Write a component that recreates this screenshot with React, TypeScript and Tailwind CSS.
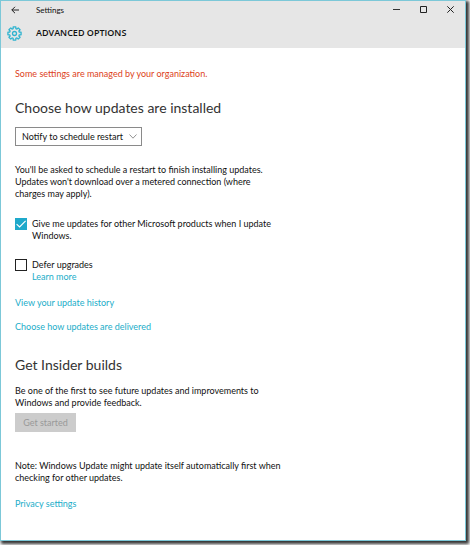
import type { ReactNode } from "react";

function GearIcon() {
  const teeth = 8;
  const points: string[] = [];
  for (let i = 0; i < teeth; i++) {
    const base = (i / teeth) * Math.PI * 2 - Math.PI / 2;
    const steps: [number, number][] = [
      [-0.27, 7],
      [-0.2, 9.4],
      [0.2, 9.4],
      [0.27, 7],
    ];
    for (const [offset, radius] of steps) {
      const x = 10 + Math.cos(base + offset) * radius;
      const y = 10 + Math.sin(base + offset) * radius;
      points.push(`${x.toFixed(2)},${y.toFixed(2)}`);
    }
  }
  return (
    <svg viewBox="-0.5 -0.5 21 21" className="size-[15px]" fill="none" stroke="#2fb3cf" strokeWidth="1.8" strokeLinejoin="round" aria-hidden="true">
      <polygon points={points.join(" ")} />
      <circle cx="10" cy="10" r="2.8" />
    </svg>
  );
}

function TextLink({ children }: { children: ReactNode }) {
  return (
    <a href="#" className="block w-fit text-[#1badc9]">
      {children}
    </a>
  );
}

function CheckOption({ id, label, defaultChecked, children }: { id: string; label: ReactNode; defaultChecked?: boolean; children?: ReactNode }) {
  return (
    <div className="flex items-start gap-[5px]">
      <span className="grid size-3 shrink-0">
        <input
          id={id}
          type="checkbox"
          defaultChecked={defaultChecked}
          className="peer col-start-1 row-start-1 size-3 appearance-none border border-[#222] bg-white checked:border-[#1fa9cb] checked:bg-[#1fa9cb]"
        />
        <svg viewBox="0 0 12 12" className="pointer-events-none col-start-1 row-start-1 hidden size-3 peer-checked:block" fill="none" stroke="white" strokeWidth="1.1" aria-hidden="true">
          <path d="M1.6 6.2 4.6 9 10.6 2.8" />
        </svg>
      </span>
      <div>
        <label htmlFor={id} className="block">
          {label}
        </label>
        {children}
      </div>
    </div>
  );
}

function SectionTitle({ children }: { children: ReactNode }) {
  return <h2 className="text-[14px] leading-6 text-[#333]">{children}</h2>;
}

export default function App() {
  return (
    <div className="flex min-h-screen bg-white pr-1 pb-1 font-['Lato','Open_Sans',sans-serif] text-[9px] leading-3 text-[#111]">
      <div className="flex flex-1 flex-col border border-[#7cc8d8] bg-white shadow-[2px_2px_3px_1px_#333]">
        <header className="bg-[#e6e6e6]">
          <div className="flex h-[17px] items-center">
            <button type="button" aria-label="Back" className="flex w-[35px] pl-[10px]">
              <svg viewBox="0 0 8 8" className="size-2" fill="none" stroke="#222" aria-hidden="true">
                <path d="M8 4H.8M4 .8.8 4 4 7.2" />
              </svg>
            </button>
            <span className="flex-1 text-[8px]">Settings</span>
            <div className="flex gap-5 pr-[11px]">
              <button type="button" aria-label="Minimize">
                <svg viewBox="0 0 7 7" className="size-[7px]" stroke="#333" aria-hidden="true">
                  <path d="M0 3.5h7" />
                </svg>
              </button>
              <button type="button" aria-label="Maximize">
                <svg viewBox="0 0 7 7" className="size-[7px]" fill="none" stroke="#222" aria-hidden="true">
                  <path d="M.5.5h6v6h-6z" />
                </svg>
              </button>
              <button type="button" aria-label="Close">
                <svg viewBox="0 0 7 7" className="size-[7px]" stroke="#222" aria-hidden="true">
                  <path d="m.3.3 6.4 6.4m0-6.4L.3 6.7" />
                </svg>
              </button>
            </div>
          </div>
          <div className="flex h-[30px] items-center gap-[14px] pl-[6px]">
            <GearIcon />
            <h1 className="font-['Open_Sans','Noto_Sans',sans-serif] font-semibold">ADVANCED OPTIONS</h1>
          </div>
        </header>

        <main className="px-[14px] pt-5 pb-7">
          <p className="mb-4 text-[#dd3f1b]">Some settings are managed by your organization.</p>

          <SectionTitle>Choose how updates are installed</SectionTitle>
          <div className="mt-[7px] grid w-[127px] items-center">
            <select aria-label="Choose how updates are installed" className="col-start-1 row-start-1 h-[19px] appearance-none border border-[#8a8a8a] bg-white px-[6px] leading-4">
              <option>Notify to schedule restart</option>
              <option>Automatic (recommended)</option>
            </select>
            <svg viewBox="0 0 8 5" className="pointer-events-none col-start-1 row-start-1 mr-[5px] h-[5px] w-2 justify-self-end" fill="none" stroke="#777" strokeWidth=".8" aria-hidden="true">
              <path d="M.5.5 4 4.2 7.5.5" />
            </svg>
          </div>

          <p className="mt-[18px]">
            You'll be asked to schedule a restart to finish installing updates.
            <br />
            Updates won't download over a metered connection (where
            <br />
            charges may apply).
          </p>

          <div className="mt-[18px] flex flex-col gap-[17px]">
            <CheckOption
              id="other-products"
              defaultChecked
              label={
                <>
                  Give me updates for other Microsoft products when I update
                  <br />
                  Windows.
                </>
              }
            />
            <CheckOption id="defer" label="Defer upgrades">
              <TextLink>Learn more</TextLink>
            </CheckOption>
          </div>

          <nav className="mt-[14px] mb-5 flex flex-col gap-3">
            <TextLink>View your update history</TextLink>
            <TextLink>Choose how updates are delivered</TextLink>
          </nav>

          <SectionTitle>Get Insider builds</SectionTitle>
          <p className="mt-2">
            Be one of the first to see future updates and improvements to
            <br />
            Windows and provide feedback.
          </p>
          <button type="button" disabled className="mt-1 block h-[19px] w-[61px] bg-[#cccccc] text-[#999]">
            Get started
          </button>

          <p className="mt-7">
            Note: Windows Update might update itself automatically first when
            <br />
            checking for other updates.
          </p>
          <div className="mt-[14px]">
            <TextLink>Privacy settings</TextLink>
          </div>
        </main>
      </div>
    </div>
  );
}
